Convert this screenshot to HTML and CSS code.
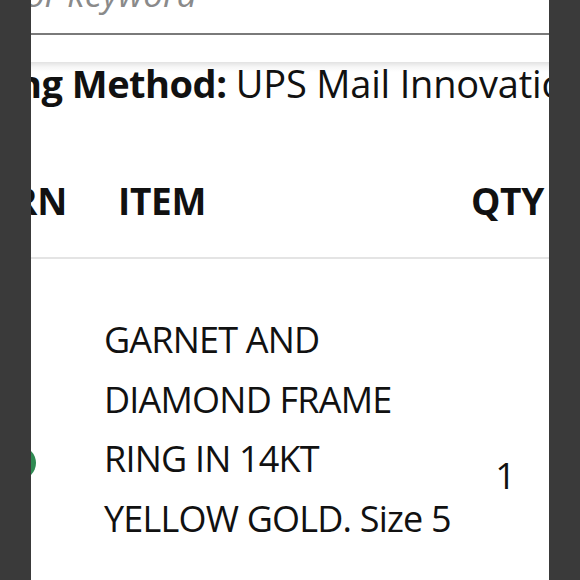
FILE: index.html
```html
<!DOCTYPE html>
<html>
<head>
<meta charset="utf-8">
<link rel="stylesheet" href="styles.css">
</head>
<body>
<div class="frame"></div>
<main class="page">
  <div class="search"><span class="placeholder">or keyword</span></div>
  <div class="method"><span class="label">ng Method:</span> <span class="value">UPS Mail Innovations</span></div>
  <div class="row head">
    <div class="c1"><span class="rn">RN</span></div>
    <div class="c2">ITEM</div>
    <div class="c3">QTY</div>
  </div>
  <div class="row item">
    <div class="c1"><span class="dot"></span></div>
    <div class="c2 desc">GARNET AND<br>DIAMOND FRAME<br>RING IN 14KT<br>YELLOW GOLD. Size 5</div>
    <div class="c3 qty">1</div>
  </div>
</main>
<div class="frame"></div>
</body>
</html>
```
FILE: styles.css
```css
html, body {
  margin: 0;
  height: 580px;
  overflow: hidden;
}
body {
  display: flex;
  background: #3a3a3a;
  font-family: "Open Sans", "Noto Sans", sans-serif;
  color: #111;
}
.frame {
  width: 31px;
  flex: none;
  background: #3a3a3a;
}
.page {
  width: 518px;
  flex: none;
  background: #fff;
  overflow: hidden;
}
.search {
  height: 33px;
  border-bottom: 2px solid #7a7a7a;
  overflow: hidden;
}
.placeholder {
  display: block;
  margin-top: -24px;
  margin-left: -6px;
  font-size: 35px;
  line-height: 35px;
  font-style: italic;
  color: #8a8a8a;
  white-space: nowrap;
}
.method {
  margin-top: 27px;
  padding-top: 2px;
  background: linear-gradient(to bottom, #e2e2e2 0, #f6f6f6 5px, #fff 10px);
  font-size: 38px;
  line-height: 39px;
  letter-spacing: -0.5px;
  white-space: nowrap;
  text-indent: -14px;
}
.label {
  font-weight: 700;
}
.value {
  letter-spacing: -0.2px;
}
.row {
  display: grid;
  grid-template-columns: 73px 362px 83px;
}
.head {
  padding-top: 79px;
  padding-bottom: 37px;
  border-bottom: 2px solid #e4e4e4;
  font-size: 37px;
  line-height: 38px;
  font-weight: 700;
  letter-spacing: -0.3px;
}
.head .c2 {
  padding-left: 14px;
}
.rn {
  display: block;
  margin-left: -18px;
}
.c3 {
  text-align: center;
}
.item {
  font-size: 36px;
  line-height: 59.5px;
}
.item .c1 {
  padding-top: 187px;
}
.dot {
  display: block;
  width: 34px;
  height: 34px;
  margin-left: -29px;
  border-radius: 50%;
  background: #2f8a52;
}
.desc {
  padding-top: 51px;
  letter-spacing: -0.8px;
  white-space: nowrap;
}
.qty {
  padding-top: 187px;
  padding-right: 4px;
}
```
